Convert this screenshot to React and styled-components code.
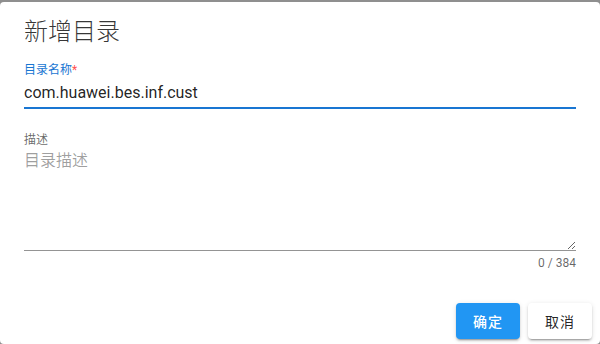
import React from "react";
import styled, { createGlobalStyle } from "styled-components";

const GlobalStyle = createGlobalStyle`
  html, body {
    margin: 0;
    padding: 0;
    background: #8f8f8f;
    overflow: hidden;
  }
  body {
    font-family: Roboto, "Noto Sans CJK SC", sans-serif;
  }
`;

const Dialog = styled.div`
  display: flex;
  flex-direction: column;
  width: 600px;
  height: 342px;
  margin-top: 2px;
  background: #fff;
  border-radius: 4px;
  box-sizing: border-box;
`;

const Title = styled.div`
  padding: 14px 24px 0;
  font-size: 24px;
  line-height: 32px;
  font-weight: 300;
  color: rgba(0, 0, 0, 0.8);
  font-family: Roboto, "Noto Sans CJK SC", sans-serif;
`;

const Form = styled.div`
  display: flex;
  flex-direction: column;
  padding: 0 24px;
`;

const Field = styled.div`
  display: flex;
  flex-direction: column;
  margin-top: ${(p) => p.$top}px;
`;

const Label = styled.label`
  font-size: 12px;
  line-height: 16px;
  color: ${(p) => (p.$active ? "#1976d2" : "rgba(0,0,0,0.6)")};
`;

const Required = styled.span`
  color: #ff5252;
`;

const Slot = styled.div`
  display: flex;
  flex-direction: column;
  border-bottom: ${(p) => (p.$active ? "2px solid #1976d2" : "1px solid rgba(0,0,0,0.42)")};
  padding-top: ${(p) => p.$pt}px;
  padding-bottom: ${(p) => p.$pb}px;
`;

const TextInput = styled.input`
  border: none;
  outline: none;
  padding: 0;
  margin: 0;
  font-family: Roboto, "Noto Sans CJK SC", sans-serif;
  font-size: 16px;
  line-height: 24px;
  height: 24px;
  color: rgba(0, 0, 0, 0.87);
  background: transparent;
`;

const TextArea = styled.textarea`
  border: none;
  outline: none;
  padding: 0;
  margin: 0;
  height: 101px;
  font-family: Roboto, "Noto Sans CJK SC", sans-serif;
  font-size: 16px;
  line-height: 24px;
  color: rgba(0, 0, 0, 0.87);
  background: transparent;
  resize: vertical;
  display: block;
  &::placeholder {
    color: rgba(0, 0, 0, 0.38);
  }
`;

const Counter = styled.div`
  align-self: flex-end;
  margin-top: 4px;
  font-size: 12px;
  line-height: 16px;
  color: rgba(0, 0, 0, 0.6);
`;

const Actions = styled.div`
  display: flex;
  justify-content: flex-end;
  gap: 8px;
  padding: 0 8px;
  margin-top: 32px;
`;

const Button = styled.button`
  width: 64px;
  height: 36px;
  border: none;
  border-radius: 4px;
  font-family: Roboto, "Noto Sans CJK SC", sans-serif;
  font-size: 14px;
  font-weight: ${(p) => (p.$primary ? 500 : 400)};
  letter-spacing: 0.9px;
  cursor: pointer;
  background: ${(p) => (p.$primary ? "#2196f3" : "#fff")};
  color: ${(p) => (p.$primary ? "#fff" : "rgba(0,0,0,0.87)")};
  box-shadow: 0 3px 1px -2px rgba(0, 0, 0, 0.2), 0 2px 2px 0 rgba(0, 0, 0, 0.14),
    0 1px 5px 0 rgba(0, 0, 0, 0.12);
`;

export default function App() {
  return (
    <>
      <GlobalStyle />
      <Dialog>
        <Title>新增目录</Title>
        <Form>
          <Field $top={14}>
            <Label $active>
              目录名称<Required>*</Required>
            </Label>
            <Slot $active $pt={3} $pb={2}>
              <TextInput defaultValue="com.huawei.bes.inf.cust" />
            </Slot>
          </Field>
          <Field $top={23}>
            <Label>描述</Label>
            <Slot $pt={1} $pb={0}>
              <TextArea placeholder="目录描述" />
            </Slot>
            <Counter>0 / 384</Counter>
          </Field>
        </Form>
        <Actions>
          <Button $primary>确定</Button>
          <Button>取消</Button>
        </Actions>
      </Dialog>
    </>
  );
}
